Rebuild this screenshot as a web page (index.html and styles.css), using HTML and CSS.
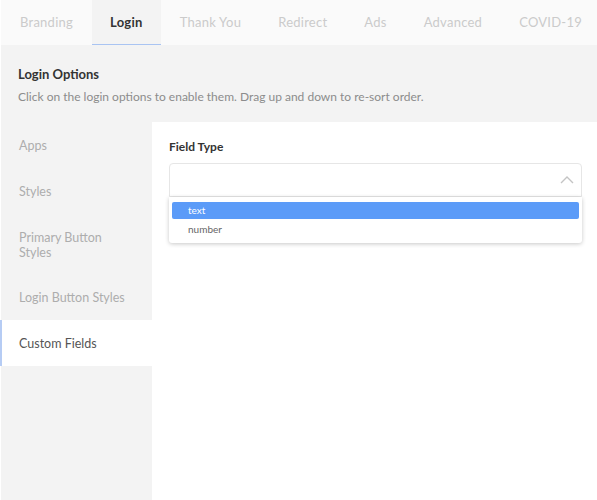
FILE: index.html
```html
<!DOCTYPE html>
<html lang="en">
<head>
  <meta charset="UTF-8" />
  <meta name="viewport" content="width=device-width,initial-scale=1.0" />
  <title>Login Settings</title>
  <link rel="stylesheet" href="styles.css">
</head>
<body>
  <div id="page">
    <nav id="tabs">
      <a class="tab">Branding</a>
      <a class="tab active">Login</a>
      <a class="tab">Thank You</a>
      <a class="tab">Redirect</a>
      <a class="tab">Ads</a>
      <a class="tab">Advanced</a>
      <a class="tab">COVID-19</a>
    </nav>

    <div id="intro">
      <h3>Login Options</h3>
      <p>Click on the login options to enable them. Drag up and down to re-sort order.</p>
    </div>

    <div id="main">
      <ul id="sideMenu">
        <li>Apps</li>
        <li>Styles</li>
        <li>Primary Button Styles</li>
        <li>Login Button Styles</li>
        <li class="active">Custom Fields</li>
      </ul>

      <section id="panel">
        <label class="field-label">Field Type</label>
        <div class="select open">
          <div class="select-box">
            <svg class="chevron" width="14" height="8" viewBox="0 0 14 8">
              <path d="M1 7 L7 1 L13 7" fill="none" stroke="#c4c4c4" stroke-width="1.4" />
            </svg>
          </div>
          <ul class="options">
            <li class="selected">text</li>
            <li>number</li>
          </ul>
        </div>
      </section>
    </div>
  </div>
</body>
</html>
```

FILE: styles.css
```css
html, body {
  margin: 0;
  height: 100%;
}

body {
  font-family: Lato, "Open Sans", Arial, sans-serif;
  background: #fff;
  color: #333;
}

#page {
  height: 100%;
  padding-left: 1px;
  display: flex;
  flex-direction: column;
  box-sizing: border-box;
}

#tabs {
  display: flex;
  background: #fafafa;
  height: 45px;
  flex-shrink: 0;
  white-space: nowrap;
  overflow: hidden;
}

.tab {
  display: flex;
  align-items: center;
  flex-shrink: 0;
  padding: 0 18.5px;
  font-size: 13px;
  letter-spacing: 0.25px;
  color: #cbcbcb;
  border-bottom: 1px solid transparent;
  cursor: pointer;
}

.tab:first-child {
  padding-left: 19px;
}

.tab.active {
  background: #f3f3f3;
  color: #333;
  font-weight: 700;
  border-bottom-color: #a9c4f2;
}

#intro {
  background: #f3f3f3;
  padding: 21px 17px 0;
  height: 77px;
  box-sizing: border-box;
  flex-shrink: 0;
}

#intro h3 {
  margin: 0;
  font-size: 13px;
  font-weight: 700;
  line-height: 16px;
  color: #333;
}

#intro p {
  margin: 7px 0 0;
  font-size: 12px;
  line-height: 16px;
  color: #8c8c8c;
}

#main {
  flex: 1;
  display: flex;
}

#sideMenu {
  list-style: none;
  margin: 0;
  padding: 0;
  width: 151px;
  background: #f3f3f3;
  flex-shrink: 0;
}

#sideMenu li {
  padding: 16px 18px 15px 17px;
  font-size: 12.5px;
  line-height: 15px;
  color: #adadad;
  border-left: 2px solid transparent;
  margin-left: -1px;
  cursor: pointer;
}

#sideMenu li:nth-child(3) {
  padding-right: 40px;
  padding-bottom: 14px;
}

#sideMenu li.active {
  background: #fff;
  color: #555;
  border-left-color: #b6ccf4;
}

#panel {
  flex: 1;
  padding: 18px 15px 0 17px;
}

.field-label {
  display: block;
  font-size: 12px;
  font-weight: 700;
  line-height: 14px;
  color: #333;
  margin-bottom: 9px;
}

.select {
  position: relative;
}

.select-box {
  height: 34px;
  box-sizing: border-box;
  border: 1px solid #e6e6e6;
  border-radius: 4px 4px 0 0;
  display: flex;
  align-items: center;
  justify-content: flex-end;
  padding-right: 7px;
}

.options {
  list-style: none;
  margin: 0;
  padding: 5px 3px 5px;
  background: #fff;
  border-radius: 0 0 3px 3px;
  box-shadow: 0 1px 4px rgba(0, 0, 0, 0.22);
}

.options li {
  height: 17px;
  line-height: 17px;
  padding-left: 16px;
  font-size: 10px;
  color: #666;
  border-radius: 2px;
}

.options li.selected {
  background: #5b9bf8;
  color: #fff;
  margin-bottom: 2px;
}
```
